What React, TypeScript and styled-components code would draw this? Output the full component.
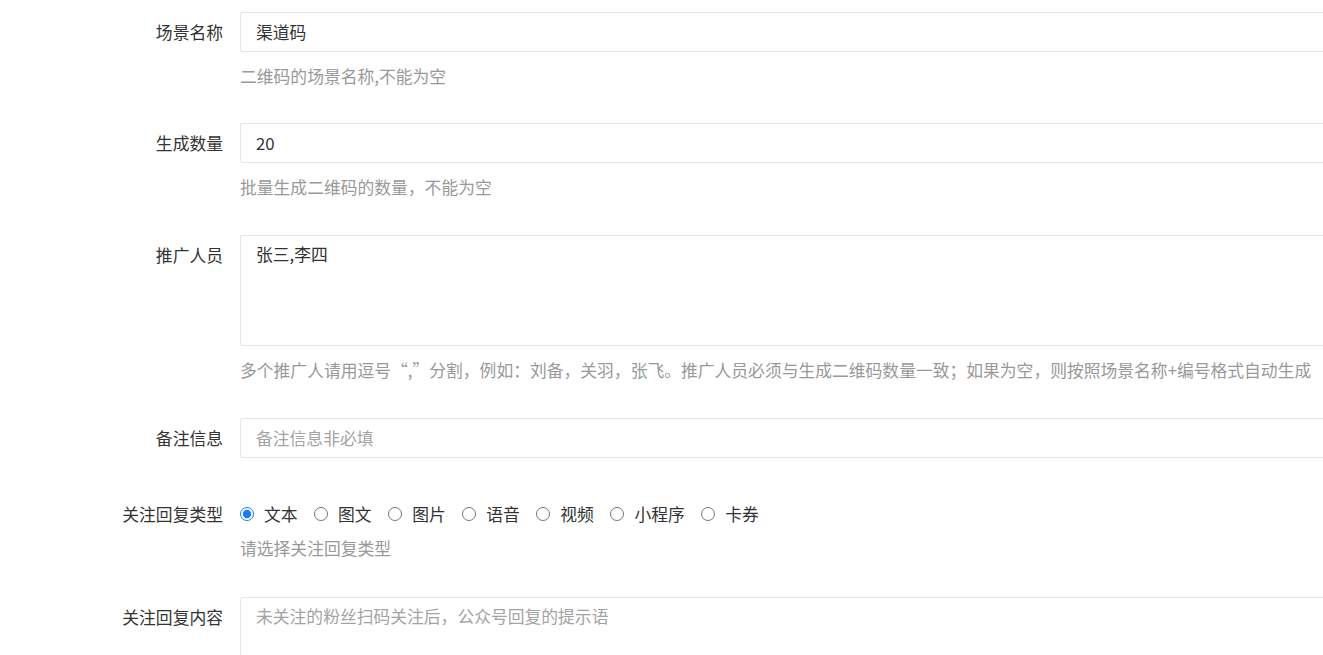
import styled, { createGlobalStyle } from 'styled-components';

const GlobalStyle = createGlobalStyle`
  html, body {
    margin: 0;
    padding: 0;
    background: #fff;
    overflow: hidden;
  }
  body {
    font-family: "Noto Sans CJK SC", "Microsoft YaHei", "Noto Sans", sans-serif;
    font-size: 16.8px;
    color: #333;
  }
`;

const Form = styled.form`
  padding-top: 12px;
  width: 1500px;
`;

const FormItem = styled.div<{ $gap?: number }>`
  display: flex;
  align-items: flex-start;
  margin-bottom: ${({ $gap }) => $gap ?? 35}px;
`;

const Label = styled.label`
  flex: 0 0 223px;
  text-align: right;
  height: 40px;
  line-height: 40px;
  font-size: 16.8px;
  color: #333;
`;

const Control = styled.div`
  margin-left: 17px;
  flex: 0 0 1200px;
`;

const TextInput = styled.input`
  box-sizing: border-box;
  display: block;
  width: 100%;
  height: 40px;
  padding: 0 15px;
  border: 1px solid #e6e6e6;
  border-radius: 2px;
  font: inherit;
  font-size: 16.8px;
  color: #333;
  outline: none;
  background: #fff;

  &::placeholder {
    color: #a3a3a3;
  }
`;

const TextArea = styled.textarea<{ $height: number }>`
  box-sizing: border-box;
  display: block;
  width: 100%;
  height: ${({ $height }) => $height}px;
  padding: 8px 15px;
  border: 1px solid #e6e6e6;
  border-radius: 2px;
  font: inherit;
  font-size: 16.8px;
  line-height: 20px;
  color: #333;
  outline: none;
  resize: none;
  background: #fff;

  &::placeholder {
    color: #a3a3a3;
  }
`;

const Help = styled.div<{ $top?: number }>`
  margin-top: ${({ $top }) => $top ?? 12}px;
  line-height: 24px;
  font-size: 16.8px;
  color: #999;
  white-space: nowrap;
`;

const RadioGroup = styled.div`
  display: flex;
  align-items: center;
  gap: 16.5px;
  height: 40px;
`;

const RadioOption = styled.label`
  display: flex;
  align-items: center;
  gap: 10px;
  font-size: 16.8px;
  color: #333;
  cursor: pointer;
`;

const Radio = styled.input`
  margin: 0;
  width: 14px;
  height: 14px;
  accent-color: #1a7cf5;
`;

const replyTypes = ['文本', '图文', '图片', '语音', '视频', '小程序', '卡券'];

export default function App() {
  return (
    <>
      <GlobalStyle />
      <Form onSubmit={(e) => e.preventDefault()}>
        <FormItem $gap={35}>
          <Label>场景名称</Label>
          <Control>
            <TextInput defaultValue="渠道码" />
            <Help>二维码的场景名称,不能为空</Help>
          </Control>
        </FormItem>

        <FormItem $gap={36}>
          <Label>生成数量</Label>
          <Control>
            <TextInput defaultValue="20" />
            <Help>批量生成二维码的数量，不能为空</Help>
          </Control>
        </FormItem>

        <FormItem $gap={36}>
          <Label>推广人员</Label>
          <Control>
            <TextArea $height={111} defaultValue="张三,李四" />
            <Help>多个推广人请用逗号“,”分割，例如：刘备，关羽，张飞。推广人员必须与生成二维码数量一致；如果为空，则按照场景名称+编号格式自动生成</Help>
          </Control>
        </FormItem>

        <FormItem $gap={36}>
          <Label>备注信息</Label>
          <Control>
            <TextInput placeholder="备注信息非必填" />
          </Control>
        </FormItem>

        <FormItem $gap={37}>
          <Label>关注回复类型</Label>
          <Control>
            <RadioGroup>
              {replyTypes.map((t, i) => (
                <RadioOption key={t}>
                  <Radio type="radio" name="replyType" defaultChecked={i === 0} />
                  {t}
                </RadioOption>
              ))}
            </RadioGroup>
            <Help $top={2}>请选择关注回复类型</Help>
          </Control>
        </FormItem>

        <FormItem>
          <Label>关注回复内容</Label>
          <Control>
            <TextArea $height={111} placeholder="未关注的粉丝扫码关注后，公众号回复的提示语" />
          </Control>
        </FormItem>
      </Form>
    </>
  );
}
